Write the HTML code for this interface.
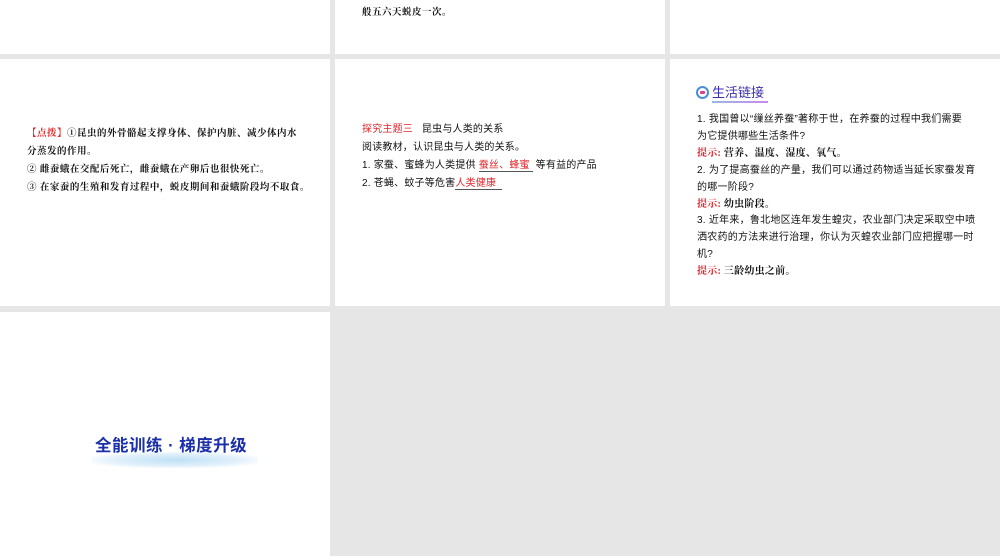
<!DOCTYPE html>
<html><head><meta charset="utf-8"><style>
body{margin:0;width:1000px;height:556px;background:#e6e6e6;position:relative;overflow:hidden;font-family:"Liberation Serif","Noto Serif CJK SC",serif;color:#111}
.p{position:absolute;background:#fff}
.t{position:absolute;white-space:nowrap;font-size:9.5px;line-height:12px}
.s{font-family:"Liberation Sans","Noto Sans CJK SC",sans-serif}
.r{color:#e0262a}
.c1{letter-spacing:0.5px}
.c2{font-size:10px;letter-spacing:0.2px}
.c3{font-size:10px;letter-spacing:0.25px}
u{text-decoration:none;border-bottom:1px solid #555;color:#e0262a}
</style></head><body>
<div class="p" style="left:0;top:0;width:330px;height:54px"></div>
<div class="p" style="left:335px;top:0;width:330px;height:54px"></div>
<div class="p" style="left:670px;top:0;width:330px;height:54px"></div>
<div class="p" style="left:0;top:59px;width:330px;height:247px"></div>
<div class="p" style="left:335px;top:59px;width:330px;height:247px"></div>
<div class="p" style="left:670px;top:59px;width:330px;height:247px"></div>
<div class="p" style="left:0;top:312px;width:330px;height:244px"></div>

<div class="t c1" style="left:362px;top:7px;font-weight:bold">般五六天蜕皮一次。</div>

<div class="t c1" style="left:27px;top:128px;font-weight:bold"><span class="r">【点拨】</span>①昆虫的外骨骼起支撑身体、保护内脏、减少体内水</div>
<div class="t c1" style="left:27px;top:146px;font-weight:bold">分蒸发的作用。</div>
<div class="t c1" style="left:27px;top:164px;font-weight:bold">② 雌蚕蛾在交配后死亡，雌蚕蛾在产卵后也很快死亡。</div>
<div class="t c1" style="left:27px;top:182px;font-weight:bold">③ 在家蚕的生殖和发育过程中，蜕皮期间和蚕蛾阶段均不取食。</div>

<div class="t s c2" style="left:362px;top:124px"><span class="r">探究主题三</span>&nbsp;&nbsp;&nbsp;昆虫与人类的关系</div>
<div class="t s c2" style="left:362px;top:142px">阅读教材，认识昆虫与人类的关系。</div>
<div class="t s c2" style="left:362px;top:160px">1. 家蚕、蜜蜂为人类提供 <u>蚕丝、蜂蜜&nbsp;</u> 等有益的产品</div>
<div class="t s c2" style="left:362px;top:178px">2. 苍蝇、蚊子等危害<u>人类健康&nbsp;&nbsp;</u></div>

<div style="position:absolute;left:696px;top:86px;width:13px;height:13px;border-radius:50%;border:2px solid #4a90d9;box-sizing:border-box;background:#fff"><div style="position:absolute;left:2px;top:3px;width:5px;height:3px;background:#e0408a;border-radius:1px"></div></div>
<div class="t s" style="left:712px;top:85px;font-size:13px;line-height:16px;color:#3b2fb0">生活链接</div>
<div style="position:absolute;left:712px;top:101px;width:56px;height:2px;background:linear-gradient(90deg,#9bd,#c8e)"></div>

<div class="t s c3" style="left:697px;top:114px">1. 我国曾以“缫丝养蚕”著称于世，在养蚕的过程中我们需要</div>
<div class="t s c3" style="left:697px;top:131px">为它提供哪些生活条件?</div>
<div class="t c3" style="left:697px;top:148px;font-weight:bold"><span class="r">提示:</span> 营养、温度、湿度、氧气。</div>
<div class="t s c3" style="left:697px;top:165px">2. 为了提高蚕丝的产量，我们可以通过药物适当延长家蚕发育</div>
<div class="t s c3" style="left:697px;top:182px">的哪一阶段?</div>
<div class="t c3" style="left:697px;top:199px;font-weight:bold"><span class="r">提示:</span> 幼虫阶段。</div>
<div class="t s c3" style="left:697px;top:215px">3. 近年来，鲁北地区连年发生蝗灾，农业部门决定采取空中喷</div>
<div class="t s c3" style="left:697px;top:232px">洒农药的方法来进行治理，你认为灭蝗农业部门应把握哪一时</div>
<div class="t s c3" style="left:697px;top:249px">机?</div>
<div class="t c3" style="left:697px;top:266px;font-weight:bold"><span class="r">提示:</span> 三龄幼虫之前。</div>

<div style="position:absolute;left:92px;top:452px;width:166px;height:16px;background:radial-gradient(ellipse at center,#bfe0f5 0%,#e3f1fb 55%,#fff 80%)"></div>
<div class="t s" style="left:95px;top:436px;font-size:16.5px;line-height:20px;color:#1a2fa8;font-weight:bold;letter-spacing:0.5px">全能训练 · 梯度升级</div>
</body></html>
